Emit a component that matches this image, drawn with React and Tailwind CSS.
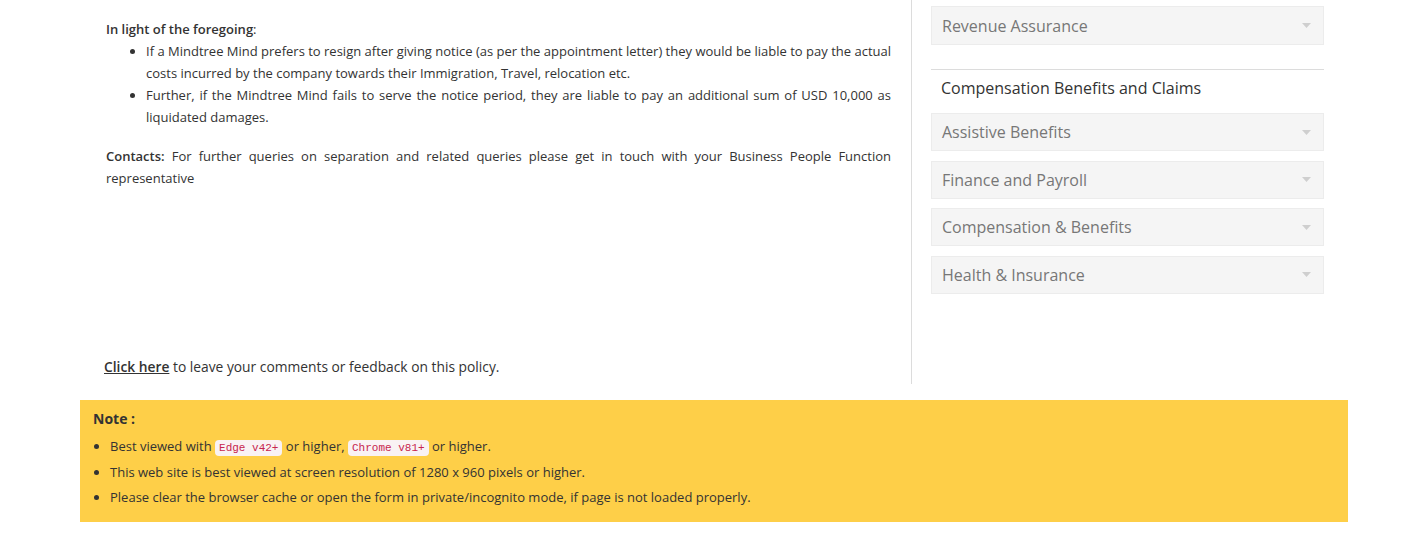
const sideItems = ['Assistive Benefits', 'Finance and Payroll', 'Compensation & Benefits', 'Health & Insurance'];

const Caret = () => (
  <svg width="9" height="5" viewBox="0 0 9 5" className="flex-shrink-0">
    <path d="M0 0 L9 0 L4.5 5 Z" fill="#cfcfcf" />
  </svg>
);

const SideItem = ({ label }) => (
  <div className="h-[38px] flex items-center justify-between bg-[#f5f5f5] border border-[#ececec] pl-[10px] pr-[12px] text-[16px] text-[#777]">
    <span>{label}</span>
    <Caret />
  </div>
);

const Code = ({ children }) => (
  <code className="bg-[#f9f2f4] text-[#c7254e] rounded-[4px] px-[4px] py-[2px] text-[11px] leading-none font-['Liberation_Mono','DejaVu_Sans_Mono',monospace]">
    {children}
  </code>
);

export default function App() {
  return (
    <div className="w-full min-h-[537px] bg-white text-[#333] font-['Open_Sans',sans-serif]">
      <div className="ml-[80px] w-[1268px]">
        <div className="flex">
          {/* left column */}
          <div className="w-[832px] h-[384px] border-r border-[#dcdcdc] pt-[18px] pr-[20px] flex flex-col">
            <div className="pl-[26px] text-[13px] leading-[22px] text-justify">
              <p>
                <strong className="font-semibold">In light of the foregoing</strong>:
              </p>
              <ul className="list-disc pl-[40px]">
                <li>
                  If a Mindtree Mind prefers to resign after giving notice (as per the appointment letter) they would be liable to pay the actual costs incurred by the company towards their Immigration, Travel, relocation etc.
                </li>
                <li>
                  Further, if the Mindtree Mind fails to serve the notice period, they are liable to pay an additional sum of USD 10,000 as liquidated damages.
                </li>
              </ul>
              <p className="mt-[17px]">
                <strong className="font-semibold">Contacts:</strong> For further queries on separation and related queries please get in touch with your Business People Function representative
              </p>
            </div>
            <p className="mt-auto mb-[7px] pl-[24px] text-[13.8px] leading-[20px]">
              <a className="font-semibold underline cursor-pointer">Click here</a> to leave your comments or feedback on this policy.
            </p>
          </div>

          {/* right column */}
          <div className="w-[436px] pl-[19px] pr-[24px] pt-[6px]">
            <div className="h-[39px] flex items-center justify-between bg-[#f5f5f5] border border-[#ececec] pl-[10px] pr-[12px] text-[16px] text-[#777]">
              <span>Revenue Assurance</span>
              <Caret />
            </div>
            <div className="mt-[24px] border-t border-[#dcdcdc]" />
            <h3 className="mt-[6px] text-[16px] leading-[24px] pl-[10px] text-[#333]">Compensation Benefits and Claims</h3>
            <div className="mt-[13px] flex flex-col gap-[9.5px]">
              {sideItems.map((item) => (
                <SideItem key={item} label={item} />
              ))}
            </div>
          </div>
        </div>

        {/* note box */}
        <div className="mt-[16px] bg-[#fecf48] pt-[9px] pb-[11px] pl-[13px] text-[13px] text-[#333]">
          <p className="font-bold text-[14px] leading-[20px]">Note :</p>
          <ul className="list-disc pl-[17px] mt-[5px] leading-[25.5px]">
            <li>
              Best viewed with <Code>Edge v42+</Code> or higher, <Code>Chrome v81+</Code> or higher.
            </li>
            <li>This web site is best viewed at screen resolution of 1280 x 960 pixels or higher.</li>
            <li>Please clear the browser cache or open the form in private/incognito mode, if page is not loaded properly.</li>
          </ul>
        </div>
      </div>
    </div>
  );
}
